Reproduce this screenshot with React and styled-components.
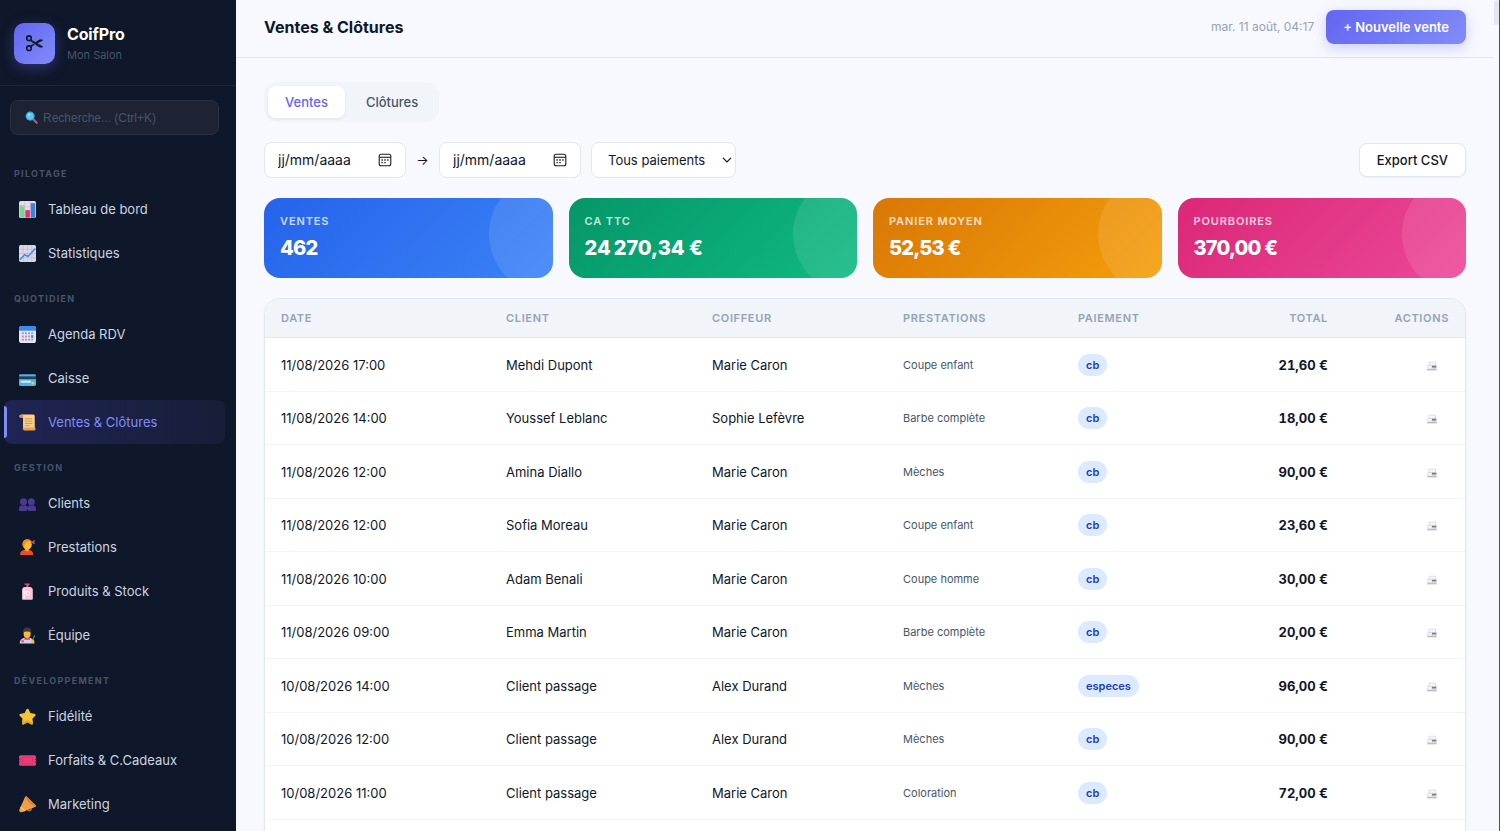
import React from "react";
import styled, { createGlobalStyle, css } from "styled-components";

const GlobalStyle = createGlobalStyle`
  *, *::before, *::after { box-sizing: border-box; }
  body {
    margin: 0;
    background: #f8fafc;
    color: #0f172a;
    font-family: Inter, "Liberation Sans", sans-serif;
    font-size: 13px;
    line-height: 22px;
  }
  button, select, input { font: inherit; color: inherit; }
  button { cursor: pointer; }
`;

/* ---------- Layout ---------- */

const Shell = styled.div`
  display: flex;
  height: 100vh;
  overflow: hidden;
  background: #f8f9fe;
`;

const Sidebar = styled.aside`
  flex: 0 0 236px;
  overflow: hidden;
  background: #0f172a;
`;

const Main = styled.main`
  flex: 1;
  min-width: 0;
  overflow: hidden;
`;

const ScrollTrack = styled.div`
  flex: 0 0 6px;
  border-right: 1px solid #4b4d55;
`;

const ScrollThumb = styled.div`
  height: 25px;
  border-radius: 3px;
  background: #e2e8f0;
`;

/* ---------- Sidebar ---------- */

const Brand = styled.div`
  display: flex;
  align-items: center;
  gap: 12px;
  height: 86px;
  padding: 2px 14px 0;
  border-bottom: 1px solid #1c2437;
`;

const Logo = styled.div`
  display: grid;
  place-items: center;
  width: 41px;
  height: 41px;
  border-radius: 10px;
  background: linear-gradient(135deg, #6366f1, #818cf8);
  box-shadow: 0 4px 14px rgba(99, 102, 241, 0.35);
`;

const BrandName = styled.div`
  font-size: 16px;
  font-weight: 700;
  line-height: 22px;
  letter-spacing: -0.01em;
  color: #fff;
`;

const BrandSub = styled.div`
  font-size: 11px;
  line-height: 20px;
  color: #475569;
`;

const SearchBox = styled.label`
  display: flex;
  align-items: center;
  gap: 5px;
  height: 35px;
  margin: 14px 17px 0 10px;
  padding: 0 14px;
  border: 1px solid #2a3142;
  border-radius: 8px;
  background: #1d2333;
`;

const SearchInput = styled.input`
  flex: 1;
  min-width: 0;
  padding: 0;
  border: 0;
  outline: 0;
  background: none;
  color: #cbd5e1;
  font-family: "Liberation Sans", Arial, sans-serif;
  font-size: 12px;
  &::placeholder { color: #475569; opacity: 1; }
`;

const Nav = styled.nav`
  padding: 15px 11px 0 4px;
`;

const NavLabel = styled.div`
  height: 37px;
  padding: 13px 10px 0;
  font-size: 9px;
  font-weight: 700;
  letter-spacing: 0.14em;
  text-transform: uppercase;
  color: #475569;
`;

const NavItem = styled.a`
  position: relative;
  display: flex;
  align-items: center;
  gap: 12px;
  height: 44px;
  padding-left: 15px;
  border-radius: 8px;
  color: #cbd5e1;
  text-decoration: none;
  ${(p) =>
    p.$active &&
    css`
      color: #818cf8;
      background: linear-gradient(90deg, #1f2453, #161e38);
      &::before {
        content: "";
        position: absolute;
        left: 0;
        top: 6px;
        bottom: 6px;
        width: 3px;
        border-radius: 0 3px 3px 0;
        background: #818cf8;
      }
    `}
`;

/* ---------- Top bar ---------- */

const TopBar = styled.header`
  display: flex;
  align-items: center;
  gap: 12px;
  height: 58px;
  padding: 0 28px 3px;
  border-bottom: 1px solid #e2e8f0;
`;

const Title = styled.h1`
  flex: 1;
  margin: 0;
  font-size: 16px;
  font-weight: 700;
  line-height: 24px;
`;

const Clock = styled.time`
  font-size: 12px;
  color: #94a3b8;
`;

const PrimaryButton = styled.button`
  height: 34px;
  padding: 0 17px;
  border: 0;
  border-radius: 8px;
  background: linear-gradient(135deg, #6366f1, #818cf8);
  box-shadow: 0 4px 14px rgba(99, 102, 241, 0.3);
  color: #fff;
  font-weight: 600;
`;

/* ---------- Content ---------- */

const Content = styled.div`
  display: flex;
  flex-direction: column;
  gap: 20px;
  padding: 24px 28px;
`;

const Tabs = styled.div`
  display: flex;
  align-self: flex-start;
  gap: 4px;
  padding: 4px;
  border-radius: 12px;
  background: #f1f5f9;
`;

const Tab = styled.button`
  height: 32px;
  padding: 0 17px;
  border: 0;
  border-radius: 8px;
  font-weight: 500;
  background: ${(p) => (p.$active ? "#fff" : "transparent")};
  color: ${(p) => (p.$active ? "#6366f1" : "#475569")};
  box-shadow: ${(p) => (p.$active ? "0 1px 3px rgba(15, 23, 42, 0.08)" : "none")};
`;

const Filters = styled.div`
  display: flex;
  align-items: center;
  gap: 10px;
`;

const field = css`
  height: 36px;
  border: 1px solid #e2e8f0;
  border-radius: 8px;
  background: #fff;
`;

const DateField = styled.label`
  ${field}
  display: flex;
  align-items: center;
  width: 142px;
  padding: 0 13px;
`;

const DateInput = styled.input`
  flex: 1;
  min-width: 0;
  padding: 0;
  border: 0;
  outline: 0;
  background: none;
  font-size: 14px;
  &::placeholder { color: #0f172a; opacity: 1; }
`;

const Arrow = styled.span`
  width: 13px;
  text-align: center;
`;

const SelectWrap = styled.div`
  position: relative;
  width: 145px;
  margin-right: auto;
  svg {
    position: absolute;
    top: 14px;
    right: 4px;
    pointer-events: none;
  }
`;

const Select = styled.select`
  ${field}
  display: block;
  width: 100%;
  padding: 0 16px;
  appearance: none;
`;

const OutlineButton = styled.button`
  height: 34px;
  padding: 0 17px;
  border: 1px solid #e2e8f0;
  border-radius: 8px;
  background: #fff;
  box-shadow: 0 1px 2px rgba(15, 23, 42, 0.05);
  font-weight: 500;
`;

const Cards = styled.section`
  display: grid;
  grid-template-columns: repeat(4, 1fr);
  gap: 16px;
`;

const Card = styled.article`
  position: relative;
  overflow: hidden;
  height: 80px;
  padding: 12px 16px;
  border-radius: 16px;
  color: #fff;
  background: linear-gradient(135deg, ${(p) => p.$from}, ${(p) => p.$to});
  &::after {
    content: "";
    position: absolute;
    top: -24px;
    right: -56px;
    width: 120px;
    height: 120px;
    border-radius: 50%;
    background: rgba(255, 255, 255, 0.1);
  }
`;

const CardLabel = styled.div`
  font-size: 11px;
  font-weight: 600;
  letter-spacing: 0.08em;
  text-transform: uppercase;
  opacity: 0.75;
`;

const CardValue = styled.div`
  font-size: 20px;
  font-weight: 800;
  letter-spacing: -0.04em;
  line-height: 32px;
`;

const TablePanel = styled.section`
  overflow: hidden;
  border: 1px solid #e2e8f0;
  border-radius: 16px;
  background: #fff;
  box-shadow: 0 1px 3px rgba(15, 23, 42, 0.05);
`;

const Table = styled.table`
  width: 100%;
  table-layout: fixed;
  border-collapse: separate;
  border-spacing: 0;
`;

const Th = styled.th`
  height: 39px;
  padding: 0 16px;
  border-bottom: 1px solid #e2e8f0;
  background: #f1f4f9;
  color: #94a3b8;
  font-size: 11px;
  font-weight: 600;
  letter-spacing: 0.06em;
  text-align: ${(p) => p.$align || "left"};
  text-transform: uppercase;
`;

const Row = styled.tr`
  height: 54px;
  &:nth-child(even) { height: 53px; }
`;

const Td = styled.td`
  padding: 0 16px;
  border-bottom: 1px solid #f1f5f9;
`;

const ServiceCell = styled(Td)`
  color: #475569;
  font-size: 11px;
`;

const TotalCell = styled(Td)`
  font-weight: 700;
  font-variant-numeric: tabular-nums;
  text-align: right;
`;

const ActionCell = styled(Td)`
  padding-right: 28px;
  text-align: right;
`;

const Badge = styled.span`
  display: block;
  width: fit-content;
  padding: 0 8px;
  border-radius: 11px;
  background: #dbeafe;
  color: #1e40af;
  font-size: 11px;
  font-weight: 600;
`;

const IconButton = styled.button`
  display: inline-flex;
  padding: 0;
  border: 0;
  background: none;
  vertical-align: middle;
`;

/* ---------- Icons ---------- */

const Emoji = ({ children, size = 17 }) => (
  <svg width={size} height={size} viewBox="0 0 16 16" aria-hidden="true">
    {children}
  </svg>
);

const ScissorsIcon = () => (
  <svg width="19" height="19" viewBox="0 0 19 19" fill="none" stroke="#0f172a" aria-hidden="true">
    <circle cx="4" cy="4.2" r="2.3" strokeWidth="1.6" />
    <circle cx="4" cy="14.2" r="2.3" strokeWidth="1.6" />
    <path d="M5.700 5.400 18 12.700c-1.500 1.200-3 .8-4.300 0L5.300 6.900z" fill="#0f172a" strokeWidth=".3" />
    <path d="M5.700 13.200 9.400 10.800 8.200 9.900l-2.900 1.800zM10.400 8.500l3.300-2.400c1.400-.8 2.900-1.100 4.300.1l-6.300 3.300z" fill="#0f172a" strokeWidth=".3" />
  </svg>
);

const SearchIcon = () => (
  <Emoji size={13}>
    <path d="m10 10 4.5 4.5" stroke="#9b6272" strokeWidth="2.8" strokeLinecap="round" />
    <circle cx="6.3" cy="6.3" r="5.6" fill="#3aa5dc" />
    <circle cx="6.3" cy="6.3" r="4.3" fill="#58c9f2" />
    <circle cx="5" cy="4.6" r="1.4" fill="#9be6fb" />
  </Emoji>
);

const ChartIcon = () => (
  <Emoji>
    <rect width="16" height="16" rx="1.6" fill="#e5dced" />
    <path d="M0 5.3h16M0 10.6h16M5.3 0v16M10.6 0v16" stroke="#c6b9d3" strokeWidth=".6" />
    <rect x=".6" y="4" width="4.6" height="11.7" fill="#86cf94" />
    <rect x="6" y="8.6" width="4.2" height="7.1" fill="#ec2c72" />
    <rect x="11" y="2" width="4.3" height="13.7" fill="#3d83d8" />
    <circle cx="3.600" cy="5" r=".8" fill="#f3d24c" />
  </Emoji>
);

const TrendIcon = () => (
  <Emoji>
    <rect width="16" height="16" rx="1.6" fill="#ddd6e6" />
    <path d="M0 4h16M0 8h16M0 12h16M4 0v16M8 0v16M12 0v16" stroke="#bfb6cc" strokeWidth=".6" />
    <path d="m.8 13.8 4.600-4.600 3 1.600 7-7.600" stroke="#3f8fe6" strokeWidth="1.4" fill="none" />
  </Emoji>
);

const CalendarIcon = () => (
  <Emoji>
    <rect width="16" height="16" rx="2.4" fill="#e8e2f3" />
    <path d="M0 4.4V2.4A2.4 2.4 0 0 1 2.4 0h11.2A2.4 2.4 0 0 1 16 2.4v2z" fill="#3a8df0" />
    <g fill="#9d94b3">
      {[6, 9, 12].map((y) => [2.8, 5.7, 8.6, 11.5].map((x) => <rect key={x + "-" + y} x={x} y={y} width="1.7" height="1.7" />))}
    </g>
    <rect x="11.3" y="8.8" width="2.2" height="2.2" fill="#3a8df0" />
  </Emoji>
);

const CardIcon = () => (
  <Emoji>
    <rect y="4" width="16" height="11" rx="1.4" fill="#4fb3e8" />
    <path d="M0 6h16v2.6H0z" fill="#263d56" />
    <rect x="1.6" y="10" width="9.4" height="2" fill="#d6edf2" />
    <circle cx="13" cy="12.4" r="1.4" fill="#f2c23d" />
  </Emoji>
);

const ScrollIcon = () => (
  <Emoji>
    <path d="M2.6.5h10.6c1 0 1.6.7 1.6 1.7v11h-11V3.4H1.3C-.3 2.6.3.5 2.6.5z" fill="#fbd08c" />
    <path d="M.4 1.9C.4.5 3.8.2 3.8 1.9v1.7H1.5c-.8 0-1.1-.9-1.1-1.7z" fill="#d98c4c" />
    <path d="M5.5 4.5h7M5.5 6.7h7M5.5 8.9h7M5.5 11h4.5" stroke="#d99252" strokeWidth=".9" />
    <path d="M3.8 12.6h11.5c.8 1.6 0 3-1.3 3H5.3c-1.5 0-2-1.5-1.5-3z" fill="#ef9f4a" />
  </Emoji>
);

const PeopleIcon = () => (
  <Emoji>
    <g fill="#4a3a92">
      <circle cx="4.3" cy="6.3" r="3.3" />
      <circle cx="11.7" cy="6.3" r="3.3" />
      <path d="M0 15v-2.200c0-2 1.600-3.300 4.200-3.300 1.700 0 3 .6 3.800 1.600.8-1 2.100-1.600 3.800-1.600 2.600 0 4.200 1.300 4.200 3.300V15H8.600v-1.200H7.400V15z" />
    </g>
    <path d="M3 10.2h2.6M10.4 10.2H13" stroke="#2f2668" strokeWidth="1" />
  </Emoji>
);

const HaircutIcon = () => (
  <Emoji>
    <path d="M1 15c0-3.4 2-5 6.2-5s6.2 1.6 6.2 5z" fill="#ee4b26" />
    <path d="M5.6 8h3.8v2.8c-1 1.1-2.8 1.1-3.8 0z" fill="#f3a21d" />
    <path d="M3.6 5.2C3.6 2.2 5.3.5 7.8.5s4.2 1.7 4.2 4.5-1.6 4.9-4 4.9-4.4-1.7-4.4-4.7z" fill="#fcbf28" />
    <path d="M3.4 6.5C2.5 2.5 4.7.3 7.9.3c1.9 0 3 .7 3.6 1.9C9.3 1.9 6 2.6 5.1 6.4c-.4 1.500-1.300 1.500-1.700.1z" fill="#ef8d1d" />
    <path d="m11 4.2 4-2.800M11.2 2.2l3.600 2.200" stroke="#a95d72" strokeWidth="1.3" />
  </Emoji>
);

const BottleIcon = () => (
  <Emoji>
    <path d="M5.3.4h4.8v1.200H8.900v2.200H7V1.600H5.300z" fill="#e2518c" />
    <path d="M2.9 6.4c0-1.600 1.200-2.700 2.700-2.700h4.700c1.500 0 2.700 1.100 2.700 2.700v8.400c0 .5-.4.9-.9.9H3.800c-.5 0-.9-.4-.9-.9z" fill="#f4c6d8" />
    <path d="M3.9 6h2v8.800h-2z" fill="#fbe4ed" />
    <circle cx="8.2" cy="9.7" r="2.3" fill="#fdf0f4" />
    <circle cx="8.2" cy="9.7" r="1" fill="#efb3cc" />
  </Emoji>
);

const StaffIcon = () => (
  <Emoji>
    <path d="M.7 15.500c0-3.600 2-5.300 6.800-5.300s7 1.700 7 5.300z" fill="#d9cfe4" />
    <path d="m5.3 9.500 2.400 1.400 2.300-1.400.3 2.600H5z" fill="#e83c75" />
    <path d="M4.4 4h6.500v3.300c0 1.800-1.300 3.100-3.200 3.100S4.400 9.100 4.400 7.300z" fill="#f8bd2e" />
    <path d="M4 5.100C3.400 2 5 .4 7.700.4S12 2 11.400 5.100C9.300 3.700 6 3.700 4 5.100z" fill="#453746" />
    <circle cx="3.4" cy="13.3" r="1.2" fill="#e15886" />
    <path d="m12.5 13.700 2.200-6" stroke="#4d7ba0" strokeWidth="1.2" />
    <circle cx="12.9" cy="13.6" r="1.5" fill="#f8bd2e" />
  </Emoji>
);

const StarIcon = () => (
  <Emoji>
    <path d="M8 .6c.6 0 .9.400 1.200 1l1.500 3.200 3.600.5c1.500.2 1.900 1.200.8 2.300l-2.500 2.600.6 3.600c.2 1.500-.7 2.100-2 1.400L8 13.500l-3.200 1.700c-1.300.7-2.200.1-2-1.400l.6-3.600L.9 7.600C-.2 6.500.2 5.500 1.700 5.300l3.600-.5 1.500-3.200c.3-.6.6-1 1.200-1z" fill="#f6c334" />
    <path d="m3.4 10.2-.6 3.600c-.2 1.500.7 2.100 2 1.400L8 13.500l3.200 1.700c1.300.7 2.200.1 2-1.400l-.2-1.200c-1.200.8-2.400.1-3.500-.5-1-.5-2-.5-3 0-1.400.8-2.700.1-3.100-1.900z" fill="#eaa52c" />
  </Emoji>
);

const TicketIcon = () => (
  <Emoji>
    <path d="M1.5 3h13c.8 0 1.500.7 1.500 1.500v1.300l-.8.9.8.9v1l-.8.9.8.9v1.100c0 .8-.7 1.500-1.500 1.500h-13C.7 13 0 12.300 0 11.500v-1.100l.8-.9-.8-.9v-1l.8-.9-.8-.9V4.500C0 3.700.7 3 1.500 3z" fill="#ec3d70" />
    <path d="M3.2 5h9.6v6H3.2z" fill="none" stroke="#d92d87" strokeWidth=".8" />
  </Emoji>
);

const MegaphoneIcon = () => (
  <Emoji>
    <path d="M8 12.500c.8 2.200 3.800 1.500 3.500-1" fill="none" stroke="#c9772f" strokeWidth="1.4" />
    <path d="M7.4.7 15.700 8.800c.4.6 0 1.300-.7 1.500L2.700 15.300c-1.500.5-3-1-2.300-2.500L5.600 1.100c.4-.8 1.200-1 1.800-.4z" fill="#f0a044" />
    <path d="M7.4.7 15.700 8.800c.4.6-.1 1.300-.9 1.200C11.600 9.200 7.500 5.200 6.400 1.600c-.2-.8.5-1.400 1-.9z" fill="#d98546" />
    <path d="M1.6 10.2c1.100 1.800 2.300 3.100 4.200 3.900" stroke="#f8c378" strokeWidth="1.3" fill="none" />
  </Emoji>
);

const DateIcon = () => (
  <svg width="14" height="14" viewBox="0 0 14 14" fill="none" stroke="#1e1e24" aria-hidden="true">
    <rect x="1.2" y="1.2" width="11.6" height="11.6" rx="2" strokeWidth="1.1" />
    <path d="M1.2 4.3h11.6" strokeWidth="1.1" />
    <path d="M6.3 7h1.4M9.2 7h1.4M3.4 9.7h1.4M6.3 9.7h1.4M3.4 7h1.4" strokeWidth="1.3" />
  </svg>
);

const ChevronIcon = () => (
  <svg width="10" height="8" viewBox="0 0 10 8" fill="none" stroke="#0f172a" strokeWidth="1.2" aria-hidden="true">
    <path d="m1 1.800 4 4 4-4" />
  </svg>
);

const PrinterIcon = () => (
  <svg width="10" height="10" viewBox="0 0 10 10" aria-hidden="true">
    <path d="M2 4V1.200h6.500V4" fill="#fafafa" stroke="#d0d0d6" strokeWidth=".7" />
    <path d="M.3 4.800 1.600 3.800h8v5.400H.3z" fill="#dcdae1" />
    <path d="M1 5h3.600v2.400H1z" fill="#f4f3f6" />
    <path d="M5 4.800h4.300v1.600H5z" fill="#777b8f" />
    <path d="M.3 8.300h9.300v.9H.3z" fill="#b1afb9" />
  </svg>
);

/* ---------- Data ---------- */

const navGroups = [
  { label: "Pilotage", items: [["Tableau de bord", ChartIcon], ["Statistiques", TrendIcon]] },
  { label: "Quotidien", items: [["Agenda RDV", CalendarIcon], ["Caisse", CardIcon], ["Ventes & Clôtures", ScrollIcon]] },
  { label: "Gestion", items: [["Clients", PeopleIcon], ["Prestations", HaircutIcon], ["Produits & Stock", BottleIcon], ["Équipe", StaffIcon]] },
  { label: "Développement", items: [["Fidélité", StarIcon], ["Forfaits & C.Cadeaux", TicketIcon], ["Marketing", MegaphoneIcon]] },
];

const cards = [
  { label: "Ventes", value: "462", from: "#2563eb", to: "#3b82f6" },
  { label: "CA TTC", value: "24\u202f270,34\u00a0€", from: "#059669", to: "#10b981" },
  { label: "Panier moyen", value: "52,53\u00a0€", from: "#d97706", to: "#f59e0b" },
  { label: "Pourboires", value: "370,00\u00a0€", from: "#db2777", to: "#ec4899" },
];

const columns = [
  { label: "Date", width: 225 },
  { label: "Client", width: 206 },
  { label: "Coiffeur", width: 191 },
  { label: "Prestations", width: 175 },
  { label: "Paiement", width: 141 },
  { label: "Total", width: 141, align: "right" },
  { label: "Actions", width: 121, align: "right" },
];

const sales = [
  ["11/08/2026 17:00", "Mehdi Dupont", "Marie Caron", "Coupe enfant", "cb", "21,60"],
  ["11/08/2026 14:00", "Youssef Leblanc", "Sophie Lefèvre", "Barbe complète", "cb", "18,00"],
  ["11/08/2026 12:00", "Amina Diallo", "Marie Caron", "Mèches", "cb", "90,00"],
  ["11/08/2026 12:00", "Sofia Moreau", "Marie Caron", "Coupe enfant", "cb", "23,60"],
  ["11/08/2026 10:00", "Adam Benali", "Marie Caron", "Coupe homme", "cb", "30,00"],
  ["11/08/2026 09:00", "Emma Martin", "Marie Caron", "Barbe complète", "cb", "20,00"],
  ["10/08/2026 14:00", "Client passage", "Alex Durand", "Mèches", "especes", "96,00"],
  ["10/08/2026 12:00", "Client passage", "Alex Durand", "Mèches", "cb", "90,00"],
  ["10/08/2026 11:00", "Client passage", "Marie Caron", "Coloration", "cb", "72,00"],
];

export default function App() {
  return (
    <Shell>
      <GlobalStyle />
      <Sidebar>
        <Brand>
          <Logo><ScissorsIcon /></Logo>
          <div>
            <BrandName>CoifPro</BrandName>
            <BrandSub>Mon Salon</BrandSub>
          </div>
        </Brand>
        <SearchBox>
          <SearchIcon />
          <SearchInput type="search" aria-label="Recherche" placeholder="Recherche... (Ctrl+K)" />
        </SearchBox>
        <Nav>
          {navGroups.map((group) => (
            <React.Fragment key={group.label}>
              <NavLabel>{group.label}</NavLabel>
              {group.items.map(([name, Icon]) => (
                <NavItem key={name} href="#" $active={name === "Ventes & Clôtures"}>
                  <Icon />
                  {name}
                </NavItem>
              ))}
            </React.Fragment>
          ))}
        </Nav>
      </Sidebar>
      <Main>
        <TopBar>
          <Title>Ventes &amp; Clôtures</Title>
          <Clock dateTime="2026-08-11T04:17">mar. 11 août, 04:17</Clock>
          <PrimaryButton type="button">+ Nouvelle vente</PrimaryButton>
        </TopBar>
        <Content>
          <Tabs role="tablist">
            <Tab type="button" role="tab" aria-selected="true" $active>Ventes</Tab>
            <Tab type="button" role="tab" aria-selected="false">Clôtures</Tab>
          </Tabs>
          <Filters>
            <DateField>
              <DateInput type="text" aria-label="Date de début" placeholder="jj/mm/aaaa" />
              <DateIcon />
            </DateField>
            <Arrow>→</Arrow>
            <DateField>
              <DateInput type="text" aria-label="Date de fin" placeholder="jj/mm/aaaa" />
              <DateIcon />
            </DateField>
            <SelectWrap>
              <Select aria-label="Mode de paiement" defaultValue="all">
                <option value="all">Tous paiements</option>
                <option value="cb">cb</option>
                <option value="especes">especes</option>
              </Select>
              <ChevronIcon />
            </SelectWrap>
            <OutlineButton type="button">Export CSV</OutlineButton>
          </Filters>
          <Cards>
            {cards.map((c) => (
              <Card key={c.label} $from={c.from} $to={c.to}>
                <CardLabel>{c.label}</CardLabel>
                <CardValue>{c.value}</CardValue>
              </Card>
            ))}
          </Cards>
          <TablePanel>
            <Table>
              <colgroup>
                {columns.map((c) => <col key={c.label} width={c.width} />)}
              </colgroup>
              <thead>
                <tr>
                  {columns.map((c) => <Th key={c.label} scope="col" $align={c.align}>{c.label}</Th>)}
                </tr>
              </thead>
              <tbody>
                {sales.map(([date, client, stylist, service, payment, total]) => (
                  <Row key={date + client}>
                    <Td>{date}</Td>
                    <Td>{client}</Td>
                    <Td>{stylist}</Td>
                    <ServiceCell>{service}</ServiceCell>
                    <Td><Badge>{payment}</Badge></Td>
                    <TotalCell>{total}&nbsp;€</TotalCell>
                    <ActionCell>
                      <IconButton type="button" aria-label="Imprimer"><PrinterIcon /></IconButton>
                    </ActionCell>
                  </Row>
                ))}
                <Row><Td colSpan={7} /></Row>
              </tbody>
            </Table>
          </TablePanel>
        </Content>
      </Main>
      <ScrollTrack><ScrollThumb /></ScrollTrack>
    </Shell>
  );
}
